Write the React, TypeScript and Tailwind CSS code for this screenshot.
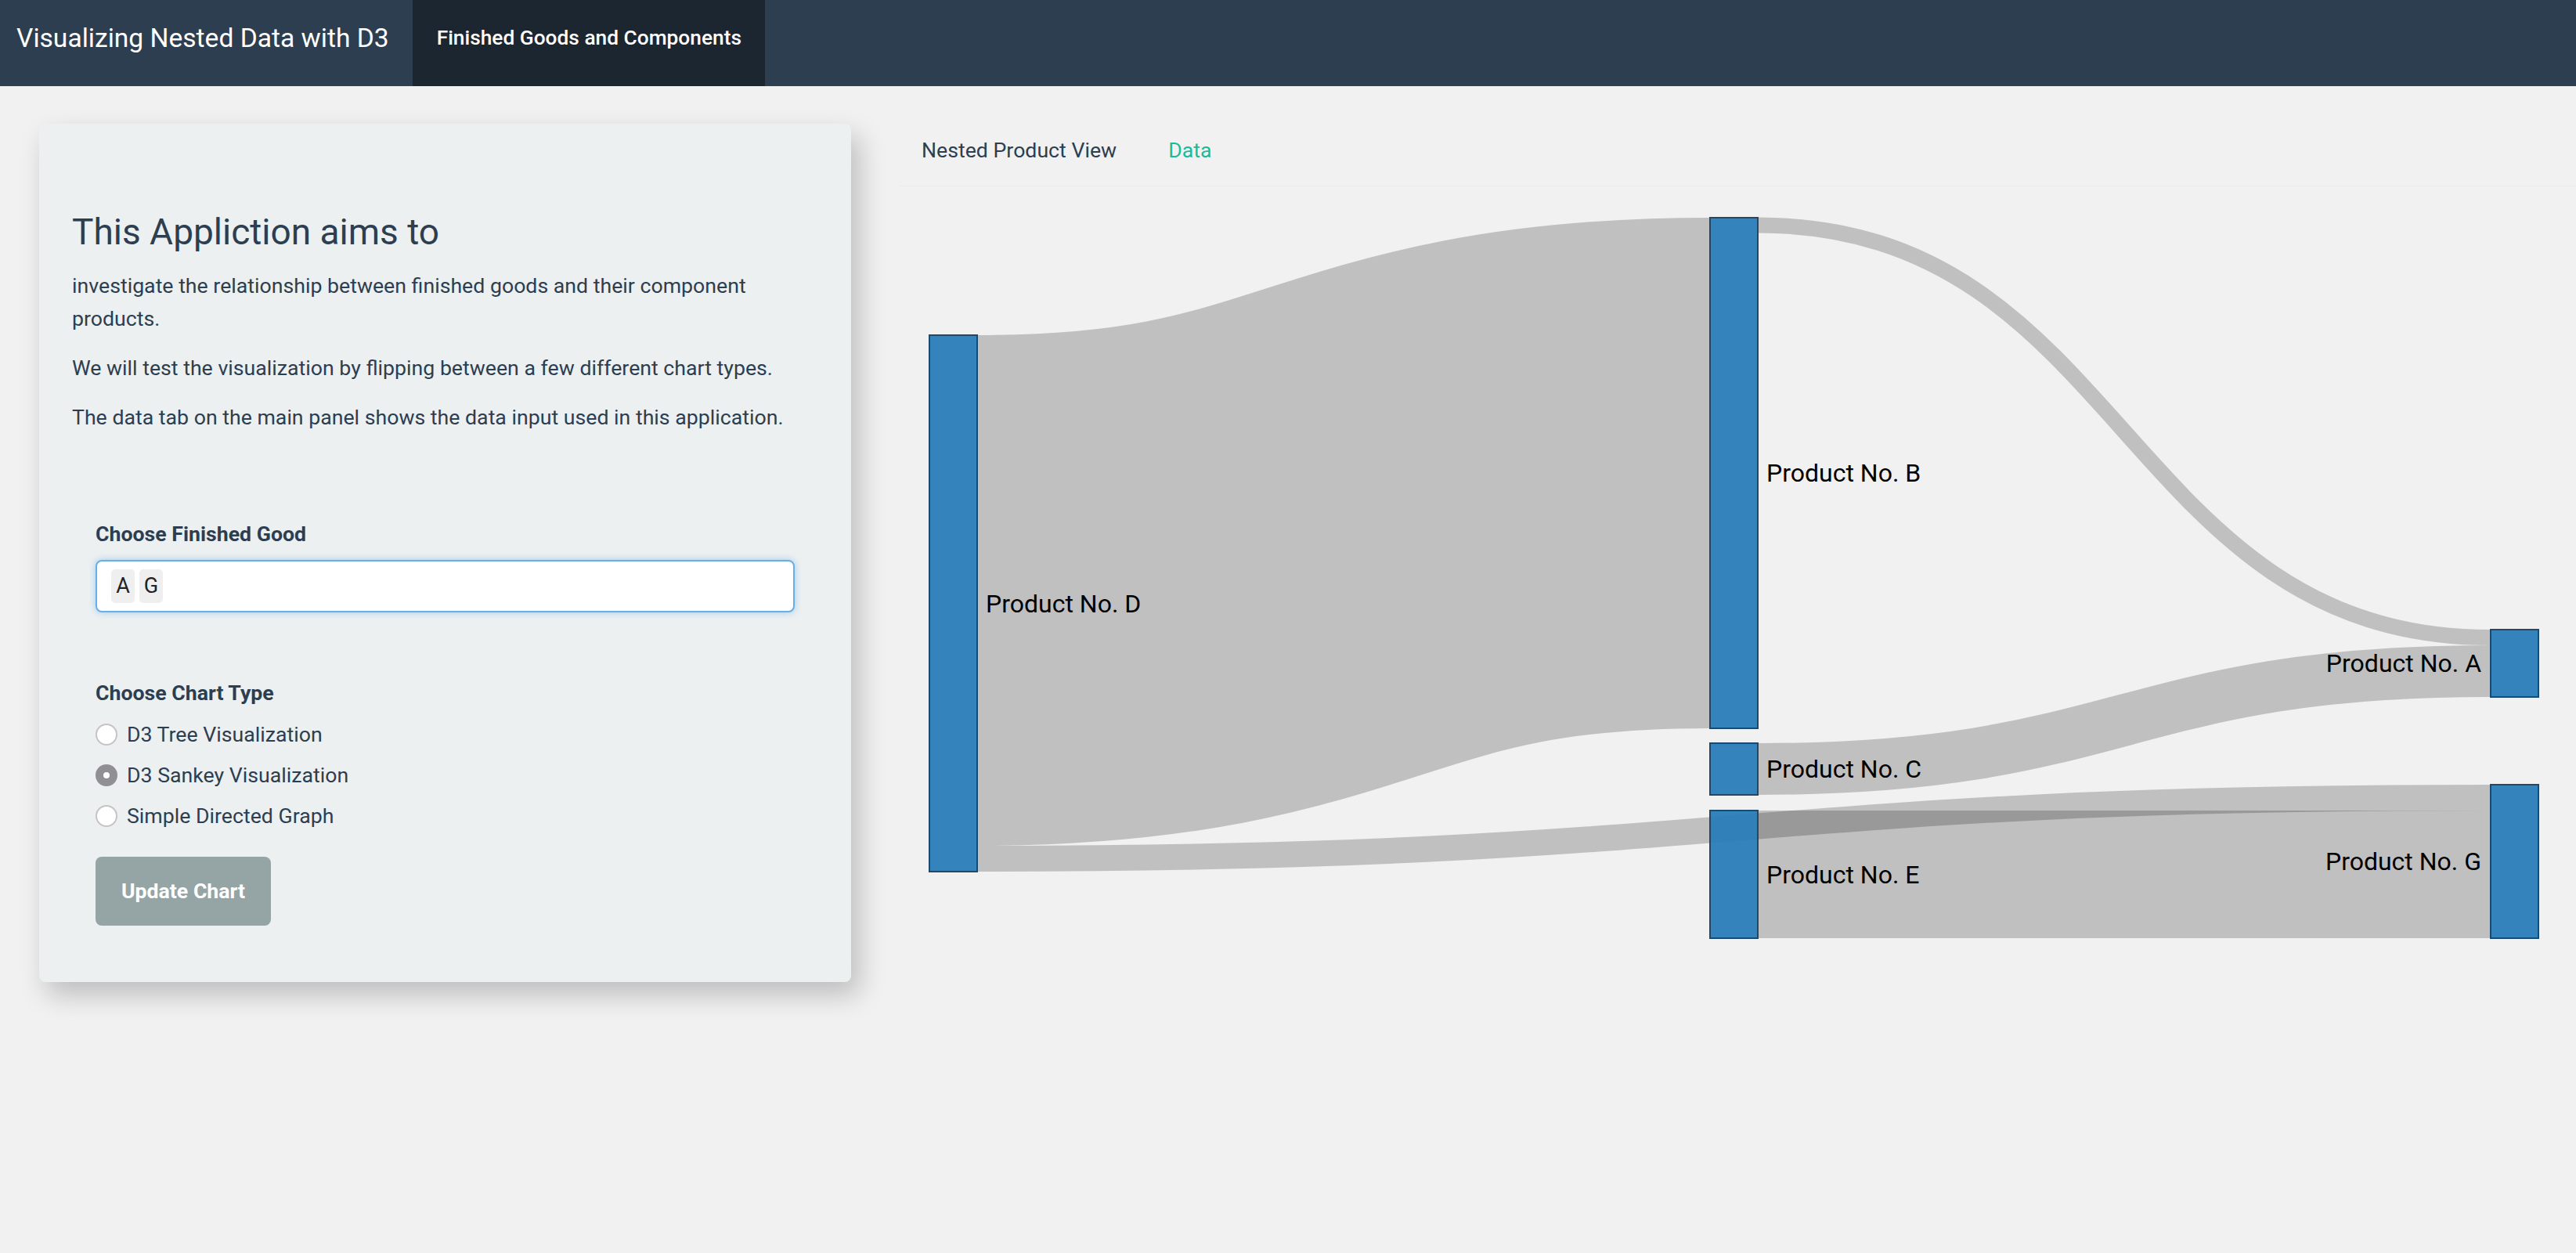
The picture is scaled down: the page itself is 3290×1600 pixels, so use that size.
import React, { useState } from 'react';

type SankeyNode = { id: string; x: number; y: number; h: number; side: 'left' | 'right' };
type SankeyLink = { x0: number; x1: number; y0: number; y1: number; w: number };

const NODE_W = 61;

const nodes: SankeyNode[] = [
  { id: 'D', x: 1187, y: 428, h: 685, side: 'left' },
  { id: 'B', x: 2184, y: 278, h: 652, side: 'left' },
  { id: 'C', x: 2184, y: 949, h: 66, side: 'left' },
  { id: 'E', x: 2184, y: 1035, h: 163, side: 'left' },
  { id: 'A', x: 3181, y: 804, h: 86, side: 'right' },
  { id: 'G', x: 3181, y: 1002, h: 196, side: 'right' },
];

const links: SankeyLink[] = [
  { x0: 1248, x1: 2184, y0: 754, y1: 604, w: 652 },
  { x0: 1248, x1: 3181, y0: 1096.5, y1: 1018.5, w: 33 },
  { x0: 2245, x1: 3181, y0: 287.5, y1: 814, w: 20 },
  { x0: 2245, x1: 3181, y0: 982, y1: 857, w: 66 },
  { x0: 2245, x1: 3181, y0: 1116.5, y1: 1116.5, w: 163 },
];

function linkPath(l: SankeyLink) {
  const xm = (l.x0 + l.x1) / 2;
  return `M${l.x0},${l.y0} C${xm},${l.y0} ${xm},${l.y1} ${l.x1},${l.y1}`;
}

function Sankey() {
  return (
    <svg width={2142} height={1000} viewBox="1148 238 2142 1000" className="block">
      {links.map((l, i) => (
        <path key={i} d={linkPath(l)} fill="none" stroke="#000" strokeOpacity={0.2} strokeWidth={l.w} />
      ))}
      {nodes.map((n) => (
        <g key={n.id}>
          <rect x={n.x} y={n.y} width={NODE_W} height={n.h} fill="#2a7cb9" fillOpacity={0.95} stroke="#1d4a6c" strokeWidth={2} />
          <text
            x={n.side === 'left' ? n.x + NODE_W + 11 : n.x - 12}
            y={n.y + n.h / 2}
            dy="0.35em"
            textAnchor={n.side === 'left' ? 'start' : 'end'}
            fontSize={32}
            fill="#000"
            style={{ fontFamily: 'Roboto, sans-serif' }}
          >
            Product No. {n.id}
          </text>
        </g>
      ))}
    </svg>
  );
}

function Radio({ label, checked, onSelect }: { label: string; checked: boolean; onSelect: () => void }) {
  return (
    <label onClick={onSelect} className="flex items-center h-[52px] cursor-pointer">
      {checked ? (
        <span className="w-[28px] h-[28px] rounded-full bg-[#8f8f94] flex items-center justify-center shrink-0">
          <span className="w-[8px] h-[8px] rounded-full bg-white"></span>
        </span>
      ) : (
        <span className="w-[28px] h-[28px] rounded-full bg-white border-2 border-[#c4c4c4] shrink-0"></span>
      )}
      <span className="ml-[12px] text-[26.7px] text-[#2c3e50]">{label}</span>
    </label>
  );
}

export default function App() {
  const [chart, setChart] = useState('sankey');
  const [tab, setTab] = useState('nested');

  return (
    <div className="min-h-screen bg-[#f1f1f1] font-['Roboto',sans-serif] text-[#2c3e50]">
      {/* Navbar */}
      <div className="h-[110px] bg-[#2c3e50] flex items-stretch">
        <div className="flex items-center pl-[21px] pr-[30px] pb-[12px] text-[33.6px] text-white">
          Visualizing Nested Data with D3
        </div>
        <div className="flex items-center bg-[#1b2631] pl-[31px] pr-[30px] pb-[12px] text-[26.3px] font-medium text-white">
          Finished Goods and Components
        </div>
      </div>

      <div className="flex items-start">
        {/* Sidebar */}
        <div className="ml-[50px] mt-[48px] w-[1037px] shrink-0 bg-[#ecf0f1] rounded-[8px] shadow-[10px_16px_34px_rgba(0,0,0,0.22)] pl-[42px] pr-[42px] pt-[113px] pb-[72px]">
          <h3 className="text-[46px] leading-[1.1] mb-[22px]">This Appliction aims to</h3>
          <p className="text-[26.7px] leading-[42px] mb-[21px] max-w-[920px]">
            investigate the relationship between finished goods and their component products.
          </p>
          <p className="text-[26.7px] leading-[42px] mb-[21px]">
            We will test the visualization by flipping between a few different chart types.
          </p>
          <p className="text-[26.7px] leading-[42px]">
            The data tab on the main panel shows the data input used in this application.
          </p>

          <div className="pl-[30px] pr-[30px] pt-[112px]">
            <div className="text-[26.7px] leading-[32px] font-bold mb-[17px]">Choose Finished Good</div>
            <div className="h-[67px] w-[893px] bg-white border-2 border-[#66afe9] rounded-[8px] shadow-[0_0_8px_rgba(102,175,233,0.6)] flex items-center pl-[18px] gap-[6px]">
              <span className="w-[30px] h-[43px] rounded-[5px] bg-[#efefef] flex items-center justify-center text-[27px] text-[#222]">A</span>
              <span className="w-[30px] h-[43px] rounded-[5px] bg-[#efefef] flex items-center justify-center text-[27px] text-[#222]">G</span>
            </div>

            <div className="text-[26.7px] leading-[32px] font-bold mt-[87px] mb-[11px]">Choose Chart Type</div>
            <Radio label="D3 Tree Visualization" checked={chart === 'tree'} onSelect={() => setChart('tree')} />
            <Radio label="D3 Sankey Visualization" checked={chart === 'sankey'} onSelect={() => setChart('sankey')} />
            <Radio label="Simple Directed Graph" checked={chart === 'graph'} onSelect={() => setChart('graph')} />

            <button className="mt-[26px] w-[224px] h-[88px] rounded-[8px] bg-[#95a5a6] text-white text-[26.7px] font-bold">
              Update Chart
            </button>
          </div>
        </div>

        {/* Main panel */}
        <div className="ml-[61px] flex-1">
          <div className="h-[128px] border-b border-[#e9eded] flex items-center pt-[37px] pl-[29px] gap-[66px] text-[26.7px]">
            <button onClick={() => setTab('nested')} className={tab === 'nested' ? 'text-[#2c3e50]' : 'text-[#18bc9c]'}>
              Nested Product View
            </button>
            <button onClick={() => setTab('data')} className={tab === 'data' ? 'text-[#2c3e50]' : 'text-[#18bc9c]'}>
              Data
            </button>
          </div>
          {tab === 'nested' ? <Sankey /> : null}
        </div>
      </div>
    </div>
  );
}
